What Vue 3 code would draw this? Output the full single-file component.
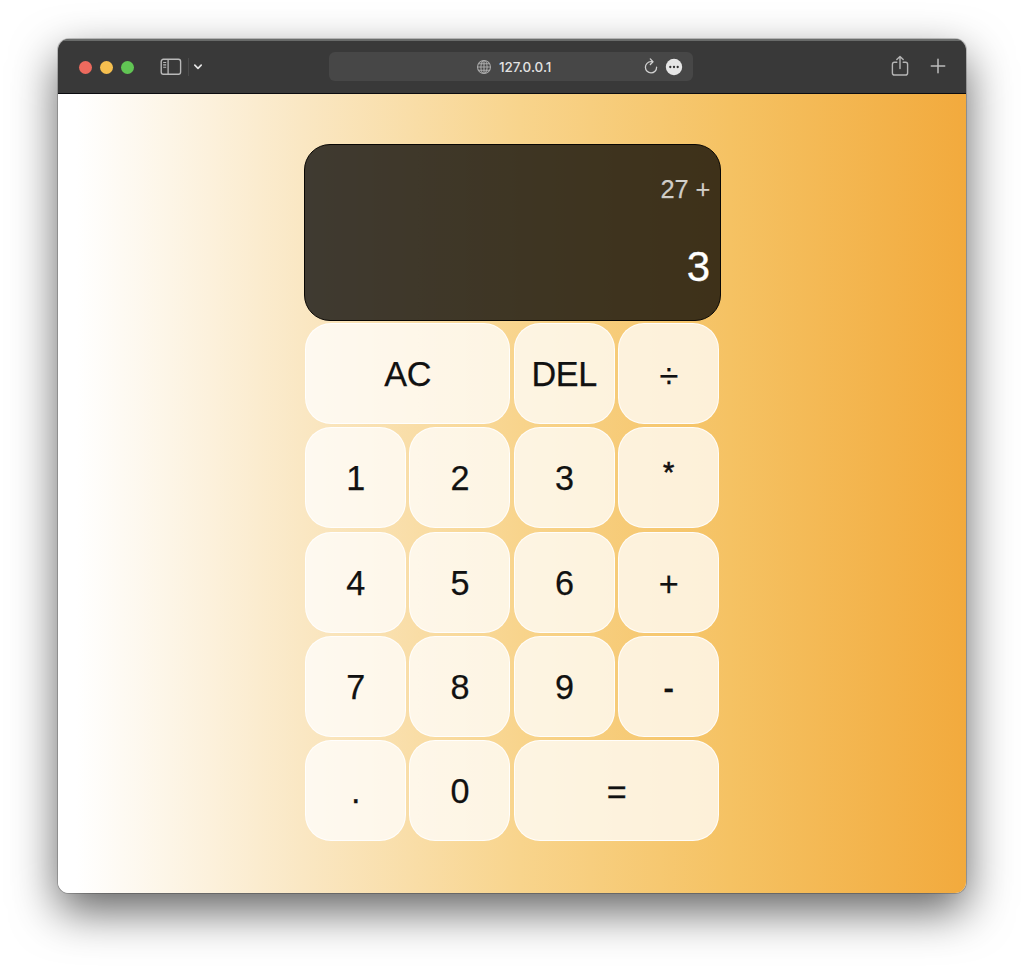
<script setup>
const keys = [
  { label: 'AC', wide: true }, { label: 'DEL' }, { label: '÷', kind: 'divide' },
  { label: '1' }, { label: '2' }, { label: '3' }, { label: '*', kind: 'times' },
  { label: '4' }, { label: '5' }, { label: '6' }, { label: '+', kind: 'operator' },
  { label: '7' }, { label: '8' }, { label: '9' }, { label: '-', kind: 'minus' },
  { label: '.' }, { label: '0' }, { label: '=', kind: 'operator', wide: true },
]
</script>

<template>
  <div class="desktop">
    <div class="window">
      <header class="toolbar">
        <div class="left">
          <i class="light red"></i><i class="light yellow"></i><i class="light green"></i>
          <svg class="sidebar" width="22" height="18" viewBox="0 0 22 18" fill="none" stroke="#b9b9b9">
            <rect x="1.2" y="1.3" width="19.4" height="15" rx="2.2" stroke-width="1.4" />
            <path d="M8.1 1.5v14.8" stroke-width="1.3" />
            <path d="M3.2 4.5h3M3.2 6.9h3M3.2 9.3h3" stroke-width="1.1" />
          </svg>
          <span class="divider"></span>
          <svg class="chevron" width="10" height="8" viewBox="0 0 10 8" fill="none" stroke="#e4e4e4" stroke-width="1.7" stroke-linecap="round" stroke-linejoin="round">
            <path d="M1.8 2.2 5 5.4l3.2-3.2" />
          </svg>
        </div>
        <div class="address">
          <svg class="globe" width="16" height="16" viewBox="0 0 16 16" fill="none" stroke="#a9a9a9" stroke-width="1.1">
            <circle cx="8" cy="8" r="6.5" />
            <ellipse cx="8" cy="8" rx="3.1" ry="6.5" />
            <path d="M8 1.6v12.8M1.6 8h12.8M2.7 4.7h10.6M2.7 11.3h10.6" />
          </svg>
          <span class="url">127.0.0.1</span>
          <svg class="reload" width="16" height="18" viewBox="0 0 16 18" fill="none" stroke="#d0d0d0" stroke-width="1.3" stroke-linecap="round" stroke-linejoin="round">
            <path d="M9.4 4.7H8A5.6 5.6 0 1 0 13.6 10.2" />
            <path d="M7.3 1.9 10 4.7 7.3 7.5" />
          </svg>
          <svg class="more" width="18" height="18" viewBox="0 0 18 18">
            <circle cx="9" cy="9" r="8.2" fill="#e6e6e6" />
            <g fill="#333"><circle cx="5.3" cy="9" r="1.15" /><circle cx="9" cy="9" r="1.15" /><circle cx="12.7" cy="9" r="1.15" /></g>
          </svg>
        </div>
        <div class="right">
          <svg width="18" height="22" viewBox="0 0 18 22" fill="none" stroke="#b5b5b5" stroke-width="1.4" stroke-linecap="round" stroke-linejoin="round">
            <path d="M5.8 7.3H3.5Q1.4 7.3 1.4 9.4v8.5Q1.4 20 3.5 20h11q2.1 0 2.1-2.1V9.4q0-2.1-2.1-2.1h-2.3" />
            <path d="M9 13.5V1.5M5.8 4.5 9 1.4l3.2 3.1" />
          </svg>
          <svg class="plus" width="16" height="16" viewBox="0 0 16 16" stroke="#bcbcbc" stroke-width="1.5" stroke-linecap="round">
            <path d="M8 1.3v13.4M1.3 8h13.4" />
          </svg>
        </div>
      </header>
      <main class="page">
        <div class="calculator">
          <div class="display">
            <div class="previous">27 +</div>
            <div class="current">3</div>
          </div>
          <button v-for="key in keys" :key="key.label" :class="{ wide: key.wide }"><span :class="key.kind">{{ key.label }}</span></button>
        </div>
      </main>
    </div>
  </div>
</template>

<style>
body { margin: 0; background: #fff; }
</style>

<style scoped>
* { box-sizing: border-box; }
.desktop {
  height: 970px;
  padding: 39px 58px 0;
  overflow: hidden;
  background: #fff;
  font-family: "Liberation Sans", Arial, sans-serif;
}
.window {
  width: 908px;
  height: 854px;
  display: flex;
  flex-direction: column;
  border-radius: 11px;
  overflow: hidden;
  box-shadow: 0 0 0 1px rgba(0, 0, 0, .2), 0 18px 46px rgba(0, 0, 0, .62);
}
.toolbar {
  flex: none;
  height: 55px;
  display: grid;
  grid-template-columns: 271px 364px 1fr;
  align-items: center;
  padding-top: 1px;
  background: #393939;
  border-bottom: 1px solid #0b0c10;
  box-shadow: inset 0 2px #696b6a;
}
.left { display: flex; align-items: center; padding-left: 21px; }
.light { width: 13px; height: 13px; border-radius: 50%; margin: 1px 8px 0 0; }
.red { background: #ed6a5e; }
.yellow { background: #f5bf4f; }
.green { background: #61c554; }
.sidebar { margin: 0 6px 0 18px; }
.divider { width: 1px; height: 18px; background: #4b4b4b; }
.chevron { margin-left: 4px; }
.address {
  height: 29px;
  display: flex;
  align-items: center;
  border-radius: 6px;
  background: #474747;
}
.globe { margin: 0 0 0 147px; }
.url {
  width: 54px;
  margin: 1px 0 0 7px;
  font: 500 13.5px/16px Inter, sans-serif;
  letter-spacing: -.03px;
  color: #e2e2e2;
  white-space: nowrap;
}
.reload { margin: 0 0 1px 90px; }
.more { margin-left: 6px; }
.right { display: flex; align-items: center; justify-content: flex-end; gap: 21px; padding: 0 20px 1px 0; }
.page {
  flex: 1;
  display: flex;
  align-items: center;
  justify-content: center;
  background: linear-gradient(to right, #fff 0%, #fff 2%, #fae7c3 27%, #f8d48c 51%, #f5c263 74%, #f2aa3d 100%);
}
.calculator {
  display: grid;
  grid-template-columns: repeat(4, 104.4px);
  grid-template-rows: 177.4px repeat(5, 104.4px);
  padding-bottom: .3px;
}
.display {
  grid-column: 1 / -1;
  display: flex;
  flex-direction: column;
  align-items: flex-end;
  justify-content: space-around;
  margin: 0 .1px 0 .5px;
  padding: 9px 9.5px;
  border: 1px solid #090704;
  border-radius: 26px;
  background: rgba(0, 0, 0, .75);
  color: #fff;
}
.previous { font-size: 25.4px; line-height: 30px; letter-spacing: -.1px; color: rgba(255, 255, 255, .75); -webkit-text-stroke: .25px rgba(255, 255, 255, .5); }
.current { font-size: 42px; line-height: 48px; -webkit-text-stroke: .3px #fff; }
button {
  margin: 1.74px;
  padding: 0;
  border: 1px solid rgba(255, 255, 255, .85);
  border-radius: 26px;
  background: rgba(255, 255, 255, .75);
  font: 34.2px "Liberation Sans", Arial, sans-serif;
  letter-spacing: -.45px;
  color: #111;
  -webkit-text-stroke: .25px #111;
}
button span { display: inline-block; transform: translateY(.5px); }
button .divide { transform: translateY(2.5px); }
button .operator { transform: translateY(2px); }
button .minus { transform: translateY(.5px) scale(.95, 1.2); }
button .times { transform: translateY(-5px) scale(.85); -webkit-text-stroke-width: .7px; }
.wide { grid-column: span 2; }
</style>
